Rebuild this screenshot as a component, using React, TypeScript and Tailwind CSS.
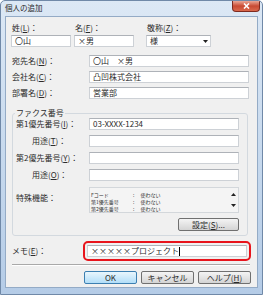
import React from "react"

function Mn({ t, k }: { t: string; k: string }) {
  return (
    <span>
      {t}(<span className="underline">{k}</span>)：
    </span>
  )
}

function Field({ children, className = "" }: { children?: React.ReactNode; className?: string }) {
  return (
    <div
      className={
        "h-[12px] shrink-0 flex items-center pl-[3px] bg-white border border-[#cdd1d6] border-t-[#aeb2b8] text-[8px] leading-none whitespace-nowrap " +
        className
      }
    >
      {children}
    </div>
  )
}

function Btn({ children, className = "", primary }: { children: React.ReactNode; className?: string; primary?: boolean }) {
  return (
    <div
      className={
        (primary
          ? "border-[#3c7fb1] bg-gradient-to-b from-[#e9f6fd] to-[#b2def8] "
          : "border-[#707070] bg-gradient-to-b from-[#f4f4f4] to-[#d4d4d4] ") +
        "h-[13px] rounded-[2px] border flex items-center justify-center text-[8px] leading-none " +
        className
      }
    >
      {children}
    </div>
  )
}

function Row({ label, pad, w, children }: { label: React.ReactNode; pad: string; w: string; children?: React.ReactNode }) {
  return (
    <div className="flex items-center">
      <div className={w + " " + pad}>{label}</div>
      <Field className="w-[150px]">{children}</Field>
    </div>
  )
}

function Tri({ up }: { up?: boolean }) {
  return (
    <svg width="5" height="3" viewBox="0 0 5 3">
      <path d={up ? "M0 3 H5 L2.5 0 Z" : "M0 0 H5 L2.5 3 Z"} fill="#222" />
    </svg>
  )
}

function Spec({ name }: { name: string }) {
  return (
    <div className="flex h-[7px] items-center">
      <span className="w-[42px]">{name}</span>
      <span>:</span>
      <span className="ml-[6px]">使わない</span>
    </div>
  )
}

export default function App() {
  return (
    <div className="w-[263px] h-[295px] flex flex-col overflow-hidden rounded-t-[5px] border border-[#7089a8] bg-gradient-to-b from-[#dce8f5] via-[#c8daee] to-[#b5cce7] font-['Noto_Sans_CJK_JP',sans-serif] text-[#2b2b2b]">
      {/* title bar */}
      <div className="h-[15px] shrink-0 flex items-start justify-between">
        <span className="pl-[4px] pt-[2px] text-[7.5px] leading-[10px] text-[#2a2a2a]">個人の追加</span>
        <div className="mr-[2px] w-[28px] h-[11px] rounded-b-[4px] border border-t-0 border-[#7e2a1f] bg-gradient-to-b from-[#eaa797] via-[#c84a33] to-[#da684c] flex items-center justify-center">
          <svg width="7" height="6" viewBox="0 0 7 6">
            <path d="M1 0.5 L6 5.5 M6 0.5 L1 5.5" stroke="white" strokeWidth="1.6" />
          </svg>
        </div>
      </div>

      {/* client */}
      <div className="mx-[4px] h-[272px] shrink-0 flex flex-col bg-[#f0f0f0] border border-[#94abc6] text-[8px] leading-[10px]">
        <div className="flex pt-[6px] pl-[5px]">
          <div className="w-[60px] flex flex-col">
            <div className="h-[10px] pl-[1px]"><Mn t="姓" k="L" /></div>
            <Field className="mt-[2px]">〇山</Field>
          </div>
          <div className="ml-[3px] w-[60px] flex flex-col">
            <div className="h-[10px] pl-[1px]"><Mn t="名" k="F" /></div>
            <Field className="mt-[2px]">×男</Field>
          </div>
          <div className="ml-[12px] w-[65px] flex flex-col">
            <div className="h-[10px] pl-[1px]"><Mn t="敬称" k="Z" /></div>
            <Field className="mt-[2px] justify-between pr-[2px]">
              様<Tri />
            </Field>
          </div>
        </div>

        <div className="mt-[8px] flex items-center pl-[6px]">
          <div className="w-[77px]"><Mn t="宛先名" k="N" /></div>
          <Field className="w-[160px]">〇山　×男</Field>
        </div>
        <div className="mt-[4px] flex items-center pl-[6px]">
          <div className="w-[77px]"><Mn t="会社名" k="C" /></div>
          <Field className="w-[160px]">凸凹株式会社</Field>
        </div>
        <div className="mt-[4px] flex items-center pl-[6px]">
          <div className="w-[77px]"><Mn t="部署名" k="D" /></div>
          <Field className="w-[160px]">営業部</Field>
        </div>

        {/* fax group */}
        <fieldset className="mt-[9px] ml-[6px] w-[236px] border border-[#d3d9df] rounded-[3px] px-[2px] pb-[4px]">
          <legend className="px-[1px] leading-[10px]">ファクス番号</legend>
          <Row label={<Mn t="第1優先番号" k="I" />} w="w-[74px]" pad="pl-[1px]">03-XXXX-1234</Row>
          <div className="mt-[5px]">
            <Row label={<Mn t="用途" k="T" />} w="w-[74px]" pad="pl-[17px]" />
          </div>
          <div className="mt-[5px]">
            <Row label={<Mn t="第2優先番号" k="Y" />} w="w-[74px]" pad="pl-[1px]" />
          </div>
          <div className="mt-[5px]">
            <Row label={<Mn t="用途" k="O" />} w="w-[74px]" pad="pl-[17px]" />
          </div>
          <div className="mt-[6px] flex items-start">
            <div className="w-[74px] pl-[1px] pt-[6px]">特殊機能：</div>
            <div className="w-[150px] h-[26px] flex bg-[#f4f4f4] border border-[#d3d7db]">
              <div className="flex-1 pl-[1px] pt-[3px] text-[5px] leading-[7px] text-[#333]">
                <Spec name="Fコード" />
                <Spec name="第1優先番号" />
                <Spec name="第2優先番号" />
              </div>
              <div className="w-[9px] flex flex-col items-center justify-between py-[5px]">
                <Tri up />
                <Tri />
              </div>
            </div>
          </div>
          <div className="mt-[5px] flex">
            <Btn className="ml-[163px] w-[61px] h-[12px]">設定(<span className="underline">S</span>)...</Btn>
          </div>
        </fieldset>

        {/* memo */}
        <div className="mt-[5px] flex items-center pl-[6px]">
          <div className="w-[71px]"><Mn t="メモ" k="E" /></div>
          <div className="w-[168px] h-[20px] rounded-[5px] border-2 border-[#e8141c] p-[2px]">
            <Field>
              ×××××プロジェクト<span className="w-px h-[9px] bg-black" />
            </Field>
          </div>
        </div>

        <div className="mt-[3px] ml-[6px] w-[238px] h-[2px] border-t border-b border-t-[#a9a9a9] border-b-white" />

        <div className="mt-[5px] flex gap-[4px] pl-[78px]">
          <Btn primary className="w-[53px]">OK</Btn>
          <Btn className="w-[53px]">キャンセル</Btn>
          <Btn className="w-[53px]">ヘルプ(<span className="underline">H</span>)</Btn>
        </div>
      </div>
    </div>
  )
}
